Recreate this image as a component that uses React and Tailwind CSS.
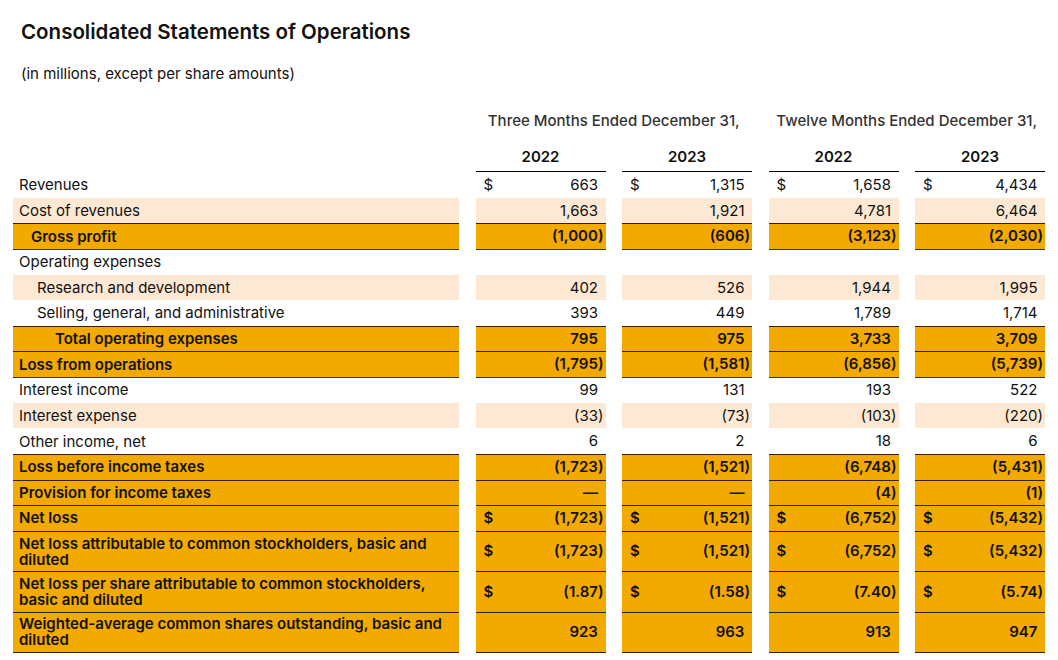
import React from "react";

// rows of the statement
const rows = [
  { label: "Revenues", dollar: true, values: ["663", "1,315", "1,658", "4,434"] },
  { label: "Cost of revenues", kind: "peach", values: ["1,663", "1,921", "4,781", "6,464"] },
  { label: "Gross profit", kind: "total", indent: "pl-[18px]", values: ["(1,000)", "(606)", "(3,123)", "(2,030)"] },
  { label: "Operating expenses", values: ["", "", "", ""] },
  { label: "Research and development", kind: "peach", indent: "pl-[24px]", values: ["402", "526", "1,944", "1,995"] },
  { label: "Selling, general, and administrative", indent: "pl-[24px]", values: ["393", "449", "1,789", "1,714"] },
  { label: "Total operating expenses", kind: "total", indent: "pl-[42px]", values: ["795", "975", "3,733", "3,709"] },
  { label: "Loss from operations", kind: "total", values: ["(1,795)", "(1,581)", "(6,856)", "(5,739)"] },
  { label: "Interest income", values: ["99", "131", "193", "522"] },
  { label: "Interest expense", kind: "peach", values: ["(33)", "(73)", "(103)", "(220)"] },
  { label: "Other income, net", values: ["6", "2", "18", "6"] },
  { label: "Loss before income taxes", kind: "total", values: ["(1,723)", "(1,521)", "(6,748)", "(5,431)"] },
  { label: "Provision for income taxes", kind: "total", values: ["—", "—", "(4)", "(1)"] },
  { label: "Net loss", kind: "total", dollar: true, values: ["(1,723)", "(1,521)", "(6,752)", "(5,432)"] },
  {
    label: ["Net loss attributable to common stockholders, basic and", "diluted"],
    kind: "total",
    dollar: true,
    tall: true,
    values: ["(1,723)", "(1,521)", "(6,752)", "(5,432)"],
  },
  {
    label: ["Net loss per share attributable to common stockholders,", "basic and diluted"],
    kind: "total",
    dollar: true,
    tall: true,
    values: ["(1.87)", "(1.58)", "(7.40)", "(5.74)"],
  },
  {
    label: ["Weighted-average common shares outstanding, basic and", "diluted"],
    kind: "total",
    tall: true,
    values: ["923", "963", "913", "947"],
  },
];

const Num = ({ value }) => {
  if (!value) return null;
  const paren = value.endsWith(")");
  return (
    <span>
      {value}
      {!paren && <span className="invisible">)</span>}
    </span>
  );
};

const App = () => {
  return (
    <div
      className="min-h-screen bg-white px-[13px] pt-[18px] text-[#111]"
      style={{ fontFamily: "Inter, 'Liberation Sans', sans-serif" }}
    >
      <h1 className="pl-[8px] text-[20.5px] font-semibold leading-[28px]">
        Consolidated Statements of Operations
      </h1>
      <p className="mt-[18px] pl-[8px] text-[15px] leading-[20px]">
        (in millions, except per share amounts)
      </p>

      <div className="mt-[27px] grid grid-cols-[446px_130px_130px_130px_130px] gap-x-[16.5px] text-[15px]">
        {/* period headers */}
        <div />
        <div className="col-span-2 text-center font-medium leading-[20px] text-[#333]">
          Three Months Ended December 31,
        </div>
        <div className="col-span-2 text-center font-medium leading-[20px] text-[#333]">
          Twelve Months Ended December 31,
        </div>

        {/* years */}
        <div />
        {["2022", "2023", "2022", "2023"].map((y, i) => (
          <div
            key={i}
            className="flex h-[41px] items-end justify-center border-b border-black pb-[4px] font-semibold leading-[20px]"
          >
            {y}
          </div>
        ))}

        {rows.map((row, i) => {
          const prev = rows[i - 1];
          const lineTop = i > 0 && (row.kind === "total" || prev.kind === "total");
          const last = i === rows.length - 1;
          const bg =
            row.kind === "total" ? "bg-[#f2a900]" : row.kind === "peach" ? "bg-[#fde9d3]" : "bg-white";
          const border = `${lineTop ? "border-t border-black/80" : "border-t border-transparent"} ${
            last ? "border-b border-b-black/80" : ""
          }`;
          const h = row.tall ? "h-[40.7px]" : "h-[25.64px]";
          const weight = row.kind === "total" ? "font-semibold" : "";

          return (
            <React.Fragment key={i}>
              <div
                className={`flex items-center pr-2 ${row.indent || "pl-[6px]"} ${bg} ${border} ${h} ${weight}`}
              >
                {Array.isArray(row.label) ? (
                  <span className="leading-[16px]">
                    {row.label[0]}
                    <br />
                    {row.label[1]}
                  </span>
                ) : (
                  <span className="leading-[20px]">{row.label}</span>
                )}
              </div>
              {row.values.map((v, j) => (
                <div
                  key={j}
                  className={`flex items-center justify-between pl-[8px] pr-[2px] ${
                    v ? bg : "bg-white"
                  } ${border} ${h} ${weight}`}
                >
                  <span>{row.dollar ? "$" : ""}</span>
                  <Num value={v} />
                </div>
              ))}
            </React.Fragment>
          );
        })}
      </div>
    </div>
  );
};

export default App;
